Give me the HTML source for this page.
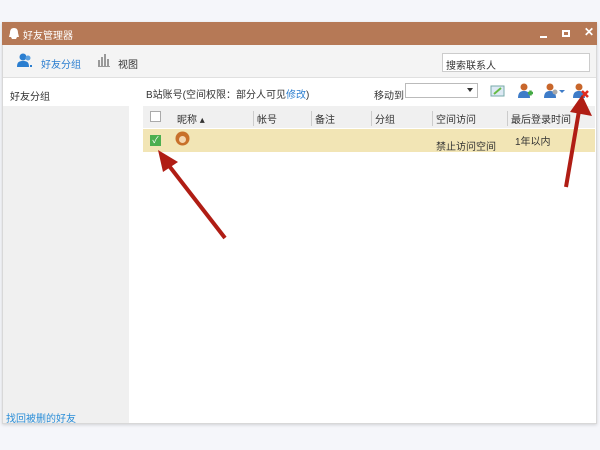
<!DOCTYPE html><html><head><meta charset="utf-8"><style>
*{margin:0;padding:0;box-sizing:border-box}
body{width:600px;height:450px;background:#f5f6fa;position:relative;overflow:hidden;font-family:"Liberation Sans","Noto Sans CJK SC",sans-serif;font-size:10px;color:#333}
.a{position:absolute}
</style></head><body>
<div class="a" style="left:2px;top:22px;width:595px;height:402px;background:#fff;border:1px solid #d8d8d8;box-shadow:0 1px 3px rgba(0,0,0,.15)"></div>
<div class="a" style="left:2px;top:22px;width:595px;height:23px;background:#b67956"></div>
<svg class="a" style="left:8px;top:27px" width="12" height="13"><path d="M6 1C3 1 2 3 2 6L1 10H3L4 12H8L9 10H11L10 6C10 3 9 1 6 1Z" fill="#fff"/></svg>
<div class="a" style="left:23px;top:27px;color:#fff;font-size:10px">好友管理器</div>
<div class="a" style="left:540px;top:36px;width:7px;height:2px;background:#fff"></div>
<div class="a" style="left:562px;top:30px;width:8px;height:7px;border:2px solid #fff"></div>
<div class="a" style="left:584px;top:25px;color:#fff;font-size:12px;font-weight:bold">✕</div>
<div class="a" style="left:3px;top:45px;width:593px;height:33px;background:#f4f4f4;border-bottom:1px solid #e0e0e0"></div>
<svg class="a" style="left:17px;top:53px" width="16" height="15"><circle cx="6" cy="4" r="3.5" fill="#2b7ed0"/><path d="M0 14C0 9 2 8 6 8S12 9 12 14Z" fill="#2b7ed0"/><circle cx="11" cy="5" r="2.5" fill="#5aa0e0"/><rect x="13" y="12" width="2" height="2" fill="#2b7ed0"/></svg>
<div class="a" style="left:41px;top:56px;color:#2b7ed0;font-size:10px">好友分组</div>
<svg class="a" style="left:98px;top:54px" width="13" height="14"><rect x="0" y="6" width="2" height="7" fill="#999"/><rect x="3" y="3" width="2" height="10" fill="#999"/><rect x="6" y="0" width="2" height="13" fill="#999"/><rect x="9" y="5" width="2" height="8" fill="#999"/><rect x="0" y="12" width="12" height="1" fill="#999"/></svg>
<div class="a" style="left:118px;top:56px;font-size:10px">视图</div>
<div class="a" style="left:442px;top:53px;width:148px;height:19px;background:#fff;border:1px solid #ccc;padding:3px 3px;font-size:10px">搜索联系人</div>
<div class="a" style="left:10px;top:88px;font-size:10px">好友分组</div>
<div class="a" style="left:3px;top:106px;width:126px;height:317px;background:#f0f0f0"></div>
<div class="a" style="left:6px;top:410px;color:#2b8ed8;font-size:10px">找回被删的好友</div>
<div class="a" style="left:146px;top:86px;font-size:10px">B站账号(空间权限：部分人可见<span style="color:#2b7ed0">修改</span>)</div>
<div class="a" style="left:374px;top:87px;font-size:10px">移动到</div>
<div class="a" style="left:405px;top:83px;width:73px;height:15px;background:#fff;border:1px solid #bbb"></div>
<div class="a" style="left:467px;top:88px;border:3px solid transparent;border-top:4px solid #333"></div>
<svg class="a" style="left:490px;top:84px" width="16" height="14"><rect x="1" y="2" width="13" height="10" fill="#dde9f4" stroke="#7aa" /><path d="M4 10L11 4" stroke="#6b4" stroke-width="2"/></svg>
<svg class="a" style="left:518px;top:83px" width="16" height="16"><circle cx="6" cy="4" r="3.5" fill="#c8662b"/><path d="M0 15C0 9 3 8 6 8S12 9 12 15Z" fill="#3e7cc8"/><path d="M10 10H15M12.5 7.5V12.5" stroke="#4a4" stroke-width="2.5"/></svg>
<svg class="a" style="left:544px;top:83px" width="22" height="16"><circle cx="6" cy="4" r="3.5" fill="#c8662b"/><path d="M0 15C0 9 3 8 6 8S12 9 12 15Z" fill="#3e7cc8"/><circle cx="11" cy="9" r="2.5" fill="#aaa"/><path d="M15 7H21L18 10Z" fill="#3e7cc8"/></svg>
<svg class="a" style="left:573px;top:83px" width="16" height="16"><circle cx="6" cy="4" r="3.5" fill="#c8662b"/><path d="M0 15C0 9 3 8 6 8S12 9 12 15Z" fill="#3e7cc8"/><path d="M9 8L15 14M15 8L9 14" stroke="#e02b20" stroke-width="2.5"/></svg>
<div class="a" style="left:143px;top:106px;width:452px;height:22px;background:#f0f0f0"></div>
<div class="a" style="left:150px;top:111px;width:11px;height:11px;background:#fff;border:1px solid #aaa"></div>
<div class="a" style="left:177px;top:111px;font-size:10px">昵称 ▴</div>
<div class="a" style="left:253px;top:111px;font-size:10px;border-left:1px solid #ccc;padding-left:3px">帐号</div>
<div class="a" style="left:311px;top:111px;font-size:10px;border-left:1px solid #ccc;padding-left:3px">备注</div>
<div class="a" style="left:371px;top:111px;font-size:10px;border-left:1px solid #ccc;padding-left:3px">分组</div>
<div class="a" style="left:432px;top:111px;font-size:10px;border-left:1px solid #ccc;padding-left:3px">空间访问</div>
<div class="a" style="left:507px;top:111px;font-size:10px;border-left:1px solid #ccc;padding-left:3px">最后登录时间</div>
<div class="a" style="left:143px;top:129px;width:452px;height:23px;background:#f2e5b5"></div>
<div class="a" style="left:150px;top:135px;width:11px;height:11px;background:#4caf50;color:#fff;font-size:9px;line-height:11px;text-align:center">✓</div>
<svg class="a" style="left:175px;top:131px" width="15" height="15"><circle cx="7.5" cy="7.5" r="7" fill="#c8702a"/><circle cx="7.5" cy="8.5" r="3.5" fill="#f4d6b0"/></svg>
<div class="a" style="left:436px;top:138px;font-size:10px">禁止访问空间</div>
<div class="a" style="left:515px;top:133px;font-size:10px">1年以内</div>
<svg class="a" style="left:0;top:0" width="600" height="450"><g stroke="#b01d14" stroke-width="4" fill="#b01d14"><line x1="225" y1="238" x2="163" y2="158"/><line x1="566" y1="187" x2="580" y2="105"/></g>
<path d="M158 150L178 162L163 172Z" fill="#b01d14"/>
<path d="M582 95L592 116L570 112Z" fill="#b01d14"/></svg>
</body></html>
